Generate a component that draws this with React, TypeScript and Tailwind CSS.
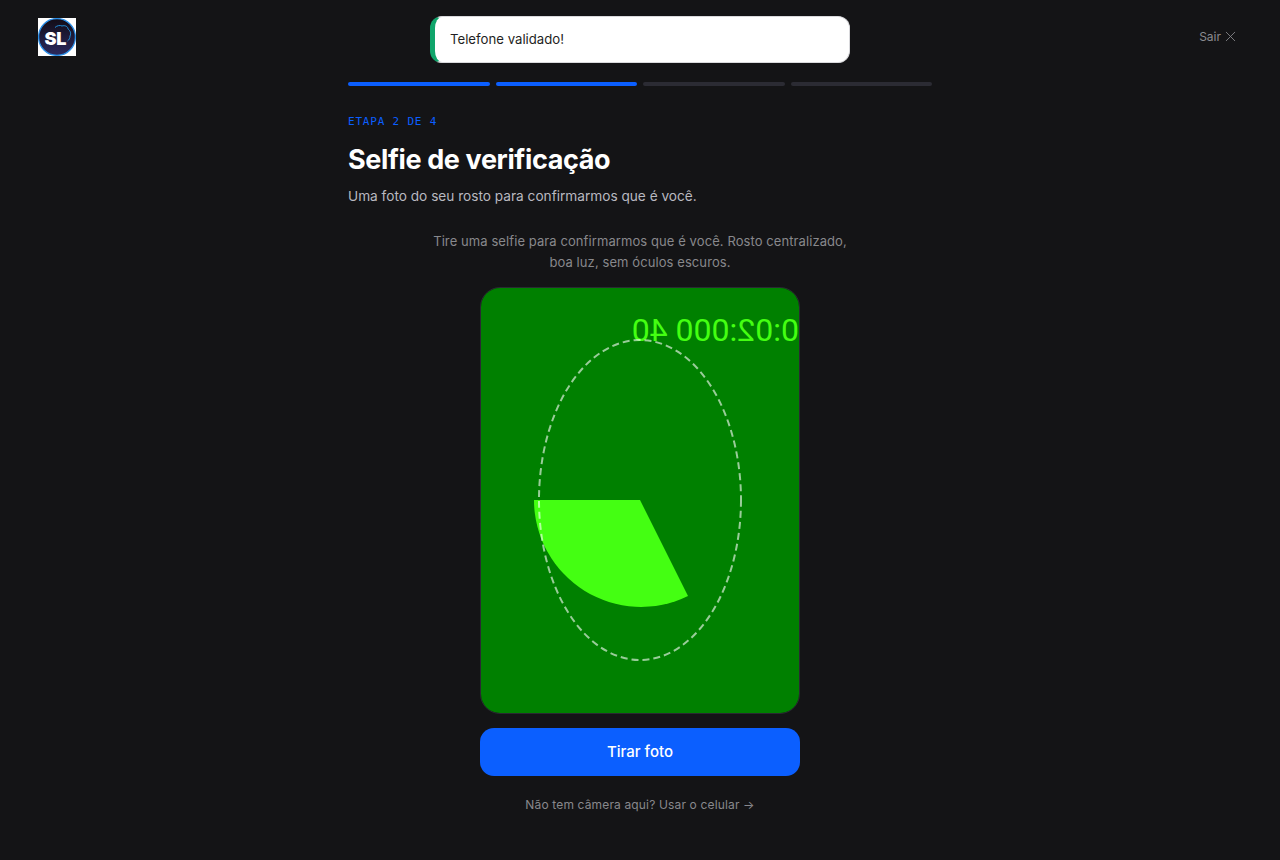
import { X } from "lucide-react";

const steps = [true, true, false, false];

function Logo() {
  return (
    <svg width="38" height="38" viewBox="0 0 38 38" className="block">
      <defs>
        <linearGradient id="logoFill" x1="0" y1="0" x2="0" y2="1">
          <stop offset="0" stopColor="#120c16" />
          <stop offset="1" stopColor="#2b2a5e" />
        </linearGradient>
      </defs>
      <rect width="38" height="38" fill="#ffffff" />
      <circle cx="19" cy="19" r="18.4" fill="url(#logoFill)" stroke="#2a8fe8" strokeWidth="1.3" />
      <path d="M17 9.5c2-2 5-2.5 7-1.5 3-1 6 .5 6 3 2 1.500 3.500 4 2 7 0 2-1 4-2.500 5" fill="none" stroke="#1f8fd8" strokeWidth="1" />
      <text x="6.500" y="27" fontFamily="Inter, sans-serif" fontWeight="900" fontSize="18" fill="#ffffff" letterSpacing="-0.3">SL</text>
    </svg>
  );
}

function CameraFeed() {
  return (
    <svg viewBox="0 0 318 425" className="block w-full h-full">
      <rect width="318" height="425" fill="#008000" />
      <path d="M159 212 L53 212 A107 107 0 0 0 207 308 Z" fill="#44ff12" />
      <text
        transform="translate(318 0) scale(-1 1)"
        x="0"
        y="53"
        fontFamily="Roboto, sans-serif"
        fontSize="32"
        fill="#44ff12"
      >
        0:02:000 40
      </text>
      <ellipse cx="159" cy="212" rx="101" ry="160" fill="none" stroke="#ffffff" strokeOpacity="0.6" strokeWidth="2" strokeDasharray="7 4" />
    </svg>
  );
}

export default function App() {
  return (
    <div className="relative min-h-[860px] bg-[#141416] font-['Inter',sans-serif] text-white overflow-hidden">
      <header className="flex items-start justify-between pl-[38px] pr-[41px] pt-[18px] h-[82px]">
        <Logo />
        <button className="flex items-center mt-[10px] text-xs leading-[17px] text-[#8b8b8f]">
          Sair
          <X size={17} strokeWidth={1.2} className="ml-px" />
        </button>
      </header>

      {/* toast */}
      <div className="absolute top-4 left-[430px] w-[420px] h-[47px] flex items-center pl-[15px] pt-px bg-white border border-l-[5px] border-[#d9d9dc] border-l-[#10a56b] rounded-xl text-[13.2px] text-[#1f1f23]">
        Telefone validado!
      </div>

      <main className="w-[584px] mx-auto">
        <div className="flex gap-1.5">
          {steps.map((done, i) => (
            <div key={i} className={`flex-1 h-1 rounded-full ${done ? "bg-[#0b5fff]" : "bg-[#2b2b33]"}`} />
          ))}
        </div>

        <p className="mt-[28px] font-['DejaVu_Sans_Mono',monospace] text-[11px] leading-[16px] tracking-[0.8px] text-[#0b5fff]">
          ETAPA 2 DE 4
        </p>
        <h1 className="mt-[12px] text-[27px] leading-[36px] font-bold tracking-[-0.014em]">Selfie de verificação</h1>
        <p className="mt-[8px] text-[13.65px] leading-[20px] text-[#b9b9c0]">
          Uma foto do seu rosto para confirmarmos que é você.
        </p>

        <div className="mt-[25px] flex flex-col items-center">
          <p className="w-[430px] text-center text-[13px] leading-[21px] tracking-[0.085px] text-[#88888c]">
            Tire uma selfie para confirmarmos que é você. Rosto centralizado, boa luz, sem óculos escuros.
          </p>
          <div className="mt-[14px] w-[320px] h-[427px] rounded-[20px] overflow-hidden border border-[#2a2a32]">
            <CameraFeed />
          </div>
          <button className="mt-[14px] w-[320px] h-12 rounded-[14px] bg-[#0b5fff] text-[15px] font-medium text-white">
            Tirar foto
          </button>
          <p className="mt-[20px] text-xs leading-[18px] tracking-[0.15px] text-[#88888c]">Não tem câmera aqui? Usar o celular →</p>
        </div>
      </main>
    </div>
  );
}
